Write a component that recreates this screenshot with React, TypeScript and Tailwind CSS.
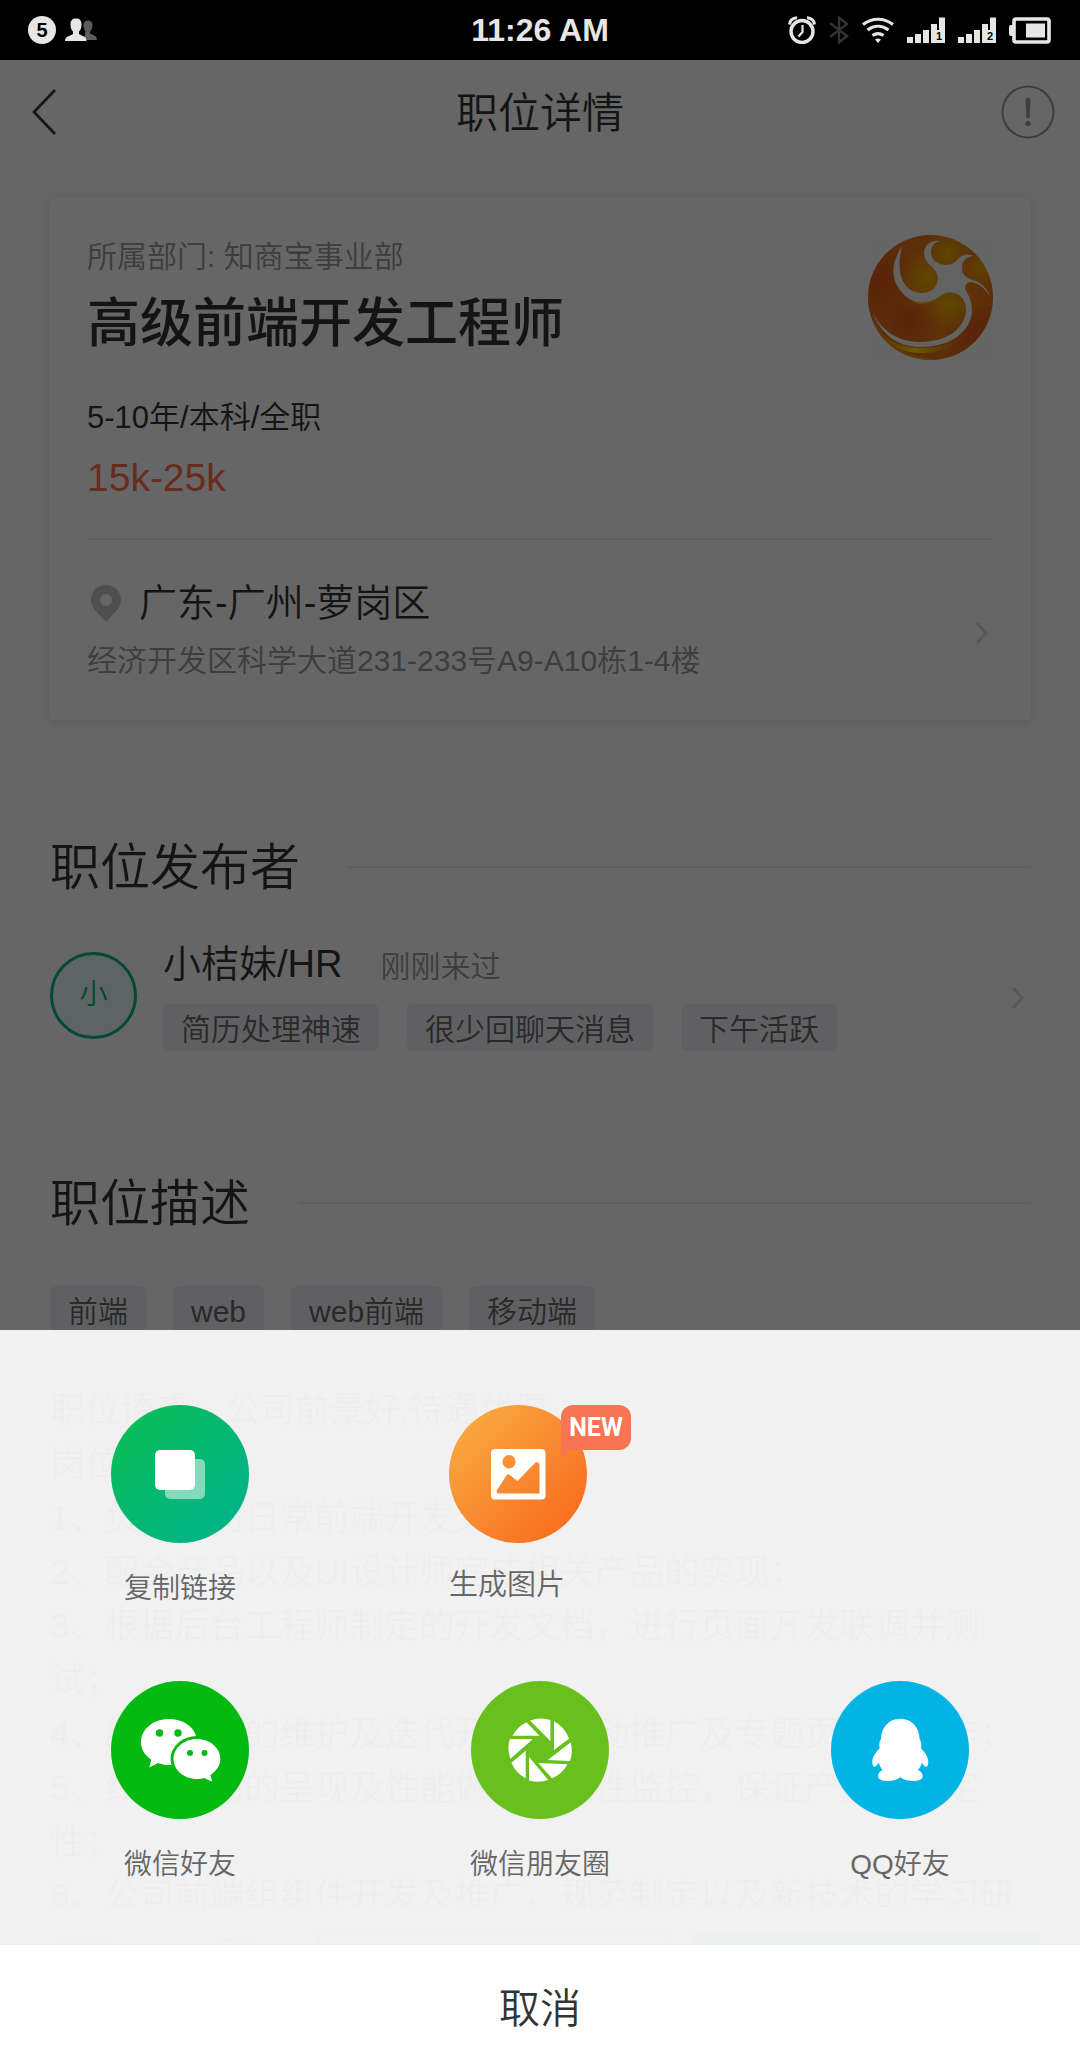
import type { ReactNode } from "react";

function StatusBar() {
  return (
    <div className="relative z-10 flex h-[60px] shrink-0 items-center bg-black px-[28px] text-[#e6e6e6]">
      <div className="flex flex-1 items-center gap-2">
        <span className="flex size-7 items-center justify-center rounded-full bg-[#e6e6e6] text-xl leading-none font-bold text-black">
          5
        </span>
        <svg width="34" height="24" viewBox="0 0 34 24" aria-hidden="true">
          <path
            d="M20 22h13c0-4-3-4.500-7-6.500v-2c2-2 2.500-4 2.500-6.500 0-3-2-4.500-4.500-4.500s-4.500 1.500-4.500 4.500c0 2.500.5 4.500 2 6.500z"
            fill="#5c5c5c"
          />
          <path
            d="M1 23c0-5 4.500-4.500 8-7v-2.500C7 12 6.500 9 6.500 6c0-3.500 2-5.500 5.500-5.500s5.500 2 5.500 5.500c0 3-.5 6-2.500 7.500V16c3.500 2.500 7.500 2 7.500 7z"
            fill="#e6e6e6"
          />
        </svg>
      </div>
      <span className="text-[32px] leading-none font-bold">11:26 AM</span>
      <div className="flex flex-1 items-center justify-end gap-[13px]">
        <svg width="28" height="28" viewBox="0 0 28 28" fill="none" stroke="#e6e6e6" aria-hidden="true">
          <circle cx="14" cy="15.500" r="11" strokeWidth="3.400" />
          <path d="M14.500 9v7l-4 4.500" strokeWidth="2.200" />
          <path d="M1.500 8.500C2 4.500 5 2 9 1.800M26.500 8.500C26 4.500 23 2 19 1.800" strokeWidth="3" />
        </svg>
        <svg width="20" height="28" viewBox="0 0 20 28" fill="none" stroke="#333333" strokeWidth="2.400" aria-hidden="true">
          <path d="M1 7l17 13-8 6.500V1.500L18 8 1 21" />
        </svg>
        <svg width="32" height="27" viewBox="0 0 32 27" fill="none" stroke="#e6e6e6" strokeWidth="3.200" aria-hidden="true">
          <path d="M1 7.500c9-7 21-7 30 0M5.500 13c6.500-5 14.500-5 21 0M10.500 18.500c3.500-2.500 7.500-2.500 11 0" />
          <path d="M13 22.500c2-1.200 4-1.200 6 0L16 26z" fill="#e6e6e6" stroke="none" />
        </svg>
        <SignalIcon sim="1" />
        <SignalIcon sim="2" />
        <svg width="43" height="27" viewBox="0 0 43 27" aria-hidden="true">
          <rect x="0" y="8" width="5" height="11" rx="2" fill="#e6e6e6" />
          <rect x="5" y="2" width="35" height="23" rx="2" fill="none" stroke="#e6e6e6" strokeWidth="3.600" />
          <rect x="17" y="6.500" width="19" height="14" fill="#e6e6e6" />
        </svg>
      </div>
    </div>
  );
}

function SignalIcon({ sim }: { sim: string }) {
  return (
    <span className="relative block">
      <svg width="38" height="26" viewBox="0 0 38 26" fill="#e6e6e6" aria-hidden="true">
        <path d="M0 20h6v6H0zM8 17h6v9H8zM16 13h6v13h-6zM24 7h6v6h2V0.500h6V26H24z" />
      </svg>
      <span className="absolute right-[3px] bottom-0 text-[11px] leading-[13px] font-bold text-black">{sim}</span>
    </span>
  );
}

function Chevron() {
  return (
    <svg
      className="mt-1.5"
      width="14"
      height="24"
      viewBox="0 0 14 24"
      fill="none"
      stroke="#dddddd"
      strokeWidth="3"
      aria-hidden="true"
    >
      <path d="M2 2l9 10-9 10" />
    </svg>
  );
}

function CompanyLogo() {
  return (
    <svg className="size-[125px] shrink-0 bg-[#fcfcfc]" viewBox="0 0 125 125" role="img" aria-label="公司标志">
      <defs>
        <radialGradient id="ball" cx="0.5" cy="0.5" r="0.5">
          <stop offset="0" stopColor="#ee9010" />
          <stop offset="0.6" stopColor="#e87c16" />
          <stop offset="1" stopColor="#e6701a" />
        </radialGradient>
        <radialGradient id="glow">
          <stop offset="0" stopColor="#eebe00" stopOpacity="0.8" />
          <stop offset="1" stopColor="#f0a800" stopOpacity="0" />
        </radialGradient>
        <radialGradient id="ember">
          <stop offset="0" stopColor="#e0501e" stopOpacity="0.8" />
          <stop offset="1" stopColor="#e0501e" stopOpacity="0" />
        </radialGradient>
        <clipPath id="ballClip">
          <circle cx="62.500" cy="62.500" r="62.500" />
        </clipPath>
        <linearGradient id="rim">
          <stop offset="0" stopColor="#f0a000" stopOpacity="0.3" />
          <stop offset="0.5" stopColor="#ffe600" />
          <stop offset="1" stopColor="#f09000" stopOpacity="0.1" />
        </linearGradient>
      </defs>
      <g clipPath="url(#ballClip)">
        <rect width="125" height="125" fill="url(#ball)" />
        <circle cx="12" cy="45" r="40" fill="url(#ember)" />
        <circle cx="108" cy="98" r="32" fill="url(#ember)" />
        <circle cx="42" cy="84" r="34" fill="url(#ember)" />
        <circle cx="58" cy="42" r="28" fill="url(#glow)" />
        <circle cx="82" cy="70" r="28" fill="url(#glow)" />
        <circle cx="80" cy="18" r="26" fill="url(#glow)" />
        <circle cx="112" cy="34" r="20" fill="url(#glow)" />
        <path d="M5 80c8 26 28 36 50 36 18 0 30-6 38-14-10 6-24 9-40 9C30 111 12 100 5 80z" fill="url(#rim)" transform="translate(-1 2)" />
        <path d="M2 84c6 24 24 38 46 41h30C40 124 14 110 2 84z" fill="#e8a000" opacity="0.8" />
        <path d="M38 60c6 6 10 9.500 16 9 6 0 12-3 16-7l-14 1z" fill="#f0c000" />
        <path
          d="M34 11C25 25 22 40 30 52c6 10 14 15 23 15 9 0 16-3 21-7 3-2 7-3 12-2 8 2 12 8 12 17-1 18-18 32-46 32C30 107 15 96 5 79c8 18 22 33 47 33 30 0 51-15 52-36 0-9-3-16-7-22 0-4 2-7 6-7 8 1 14 7 19 14-3-8-9-14-20-17-6-3-8-6-8-12 0-6 4-10 11-11-9-4-13 1-18 6-2 2-6 3-10 3-10-1-14-7-14-13 0-6 4-10 9-11-9-1-16 4-16 12 0 12 14 14 14 26-1 9-7 14-17 14-17-1-26-18-19-47z"
          fill="#f4f4f4"
        />
      </g>
    </svg>
  );
}

function Tags({ items, gap }: { items: string[]; gap: string }) {
  return (
    <ul className={`flex flex-wrap ${gap}`}>
      {items.map((item) => (
        <li key={item} className="rounded-md bg-[#f1f1f5] px-[18px] pt-[5px] pb-px text-[30px] leading-[41px] text-[#666666]">
          {item}
        </li>
      ))}
    </ul>
  );
}

function SectionTitle({ children }: { children: ReactNode }) {
  return (
    <div className="flex items-center gap-12">
      <h2 className="pt-[3px] text-[50px] leading-[60px] font-[350]">{children}</h2>
      <span className="h-0.5 flex-1 bg-[#ededed]" />
    </div>
  );
}

function JobCard() {
  return (
    <section className="mt-[33px] rounded-sm bg-white px-[38px] pt-[38px] shadow-[0_2px_12px_rgba(0,0,0,0.12)]">
      <div className="flex items-start justify-between">
        <div className="pt-0.5">
          <p className="text-[30px] leading-10 text-[#999999]">所属部门: 知商宝事业部</p>
          <h2 className="mt-[11px] text-[53px] leading-[72px] font-medium">高级前端开发工程师</h2>
          <p className="mt-[38px] text-[31px] leading-10">5-10年/本科/全职</p>
          <p className="mt-[15px] text-[39px] leading-[50px] text-[#fe6e4b]">15k-25k</p>
        </div>
        <CompanyLogo />
      </div>
      <a href="#location" className="mt-[35px] flex items-center justify-between border-t-2 border-[#ededed] pt-[38px] pr-1 pb-[39px]">
        <span>
          <span className="flex items-center gap-[18px] pl-1 text-[38px] leading-[50px]">
            <svg width="30" height="37" viewBox="0 0 30 37" aria-hidden="true">
              <path
                fillRule="evenodd"
                d="M15 0C6.500 0 0 6.500 0 15c0 9 9 14.500 15 22 6-7.500 15-13 15-22C30 6.500 23.500 0 15 0zm0 9a6 6 0 110 12 6 6 0 010-12z"
                fill="#c6c6c6"
              />
            </svg>
            广东-广州-萝岗区
          </span>
          <span className="mt-[13px] block text-[30px] leading-10 text-[#999999]">经济开发区科学大道231-233号A9-A10栋1-4楼</span>
        </span>
        <Chevron />
      </a>
    </section>
  );
}

function Publisher() {
  return (
    <a href="#publisher" className="mt-[41px] flex items-center pr-1.5">
      <span className="flex size-[87px] items-center justify-center rounded-full border-[3px] border-[#00b38a] bg-[#ecf9f9] text-[28px] text-[#00b38a]">
        小
      </span>
      <span className="ml-[26px] flex-1">
        <span className="flex items-baseline gap-[38px]">
          <span className="text-[38px] leading-[50px]">小桔妹/HR</span>
          <span className="text-[30px] leading-[50px] text-[#999999]">刚刚来过</span>
        </span>
        <span className="mt-3 block">
          <Tags items={["简历处理神速", "很少回聊天消息", "下午活跃"]} gap="gap-7" />
        </span>
      </span>
      <Chevron />
    </a>
  );
}

const DESCRIPTION = [
  "职位诱惑：公司前景好,待遇优厚",
  "岗位职责：",
  "1、负责公司日常前端开发文档；",
  "2、配合产品以及UI设计师完成相关产品的实现；",
  "3、根据后台工程师制定的开发文档，进行页面开发联调并测试；",
  "4、线上项目的维护及迭代开发、活动推广及专题页面的制作；",
  "5、线上页面的呈现及性能做出兼容性监控，保证产品的稳定性；",
  "6、公司前端组组件开发及推广，规范制定以及新技术的学习研究；",
];

function ActionBar() {
  return (
    <footer className="flex h-[153px] shrink-0 items-start bg-white pt-[25px] pr-10 pl-[54px]">
      <button type="button" aria-label="收藏" className="mt-1">
        <svg width="56" height="52" viewBox="0 0 56 52" fill="none" stroke="#999999" strokeWidth="3">
          <path d="M28 48C10 36 2 26 2 16 2 2 20-2 28 10 36-2 54 2 54 16c0 10-8 20-26 32z" />
        </svg>
      </button>
      <button type="button" aria-label="分享" className="mt-1 ml-[98px]">
        <svg width="54" height="52" viewBox="0 0 54 52" fill="none" stroke="#999999" strokeWidth="3">
          <path d="M30 4H20C10 4 3 11 3 22v26h34" />
          <path d="M40 2l12 14-12 14" stroke="#00b38a" />
        </svg>
      </button>
      <button type="button" aria-label="聊一聊" className="ml-14 h-[104px] flex-1 rounded border-2 border-[#00b38a]" />
      <button type="button" aria-label="投个简历" className="ml-[26px] h-[104px] flex-1 rounded bg-[#00b38a]" />
    </footer>
  );
}

function CopyIcon() {
  return (
    <svg className="size-[138px]" viewBox="0 0 138 138" aria-hidden="true">
      <defs>
        <linearGradient id="copyFill" x1="0.1" y1="0.1" x2="0.9" y2="0.9">
          <stop offset="0" stopColor="#09be58" />
          <stop offset="1" stopColor="#01b28a" />
        </linearGradient>
      </defs>
      <circle cx="69" cy="69" r="69" fill="url(#copyFill)" />
      <rect x="54" y="54" width="40" height="40" rx="5" fill="#ffffff" opacity="0.5" />
      <rect x="44" y="45" width="40" height="40" rx="5" fill="#ffffff" />
    </svg>
  );
}

function PictureIcon() {
  return (
    <svg className="size-[138px]" viewBox="0 0 138 138" aria-hidden="true">
      <defs>
        <linearGradient id="pictureFill" x1="0.1" y1="0.1" x2="0.9" y2="0.9">
          <stop offset="0" stopColor="#f9a943" />
          <stop offset="1" stopColor="#f86c1e" />
        </linearGradient>
      </defs>
      <circle cx="69" cy="69" r="69" fill="url(#pictureFill)" />
      <path
        fillRule="evenodd"
        d="M46 44h46.500a4 4 0 014 4v42.500a4 4 0 01-4 4H46a4 4 0 01-4-4V48a4 4 0 014-4zM60 50a6.600 6.800 0 100 13.600 6.600 6.800 0 000-13.600zM50 88.500h40.500V60c0-2.500-3-4-5-1.500L68.500 76l-7.500-6c-1-1-2.500-1-3.500.5L48 85c-1 1.800 0 3.500 2 3.500z"
        fill="#ffffff"
      />
    </svg>
  );
}

function WechatIcon() {
  return (
    <svg className="size-[138px]" viewBox="0 0 138 138" aria-hidden="true">
      <circle cx="69" cy="69" r="69" fill="#04b90f" />
      <path
        d="M58 38c-15.500 0-28 10-28 23.300 0 7.200 4 13.300 10.300 17.500L38.300 86.500l8.700-4.500c4 1.500 7.500 2.300 13 2 10 0 26-9 26-23C86 47.500 73.500 38 58 38z"
        fill="#ffffff"
      />
      <ellipse cx="86" cy="78" rx="26.500" ry="23" fill="#04b90f" />
      <path
        d="M86 58c-13 0-23.500 9-23.500 20S73 98 86 98c2.500 0 5-.4 7-1l8.300 3.800-2-6.800c6-3.800 10-9.500 10-16C109.500 67 99 58 86 58z"
        fill="#ffffff"
      />
      <g fill="#04b90f">
        <circle cx="48.500" cy="52" r="3.700" />
        <circle cx="67" cy="52" r="3.700" />
        <circle cx="79" cy="72" r="3" />
        <circle cx="93.500" cy="72" r="3" />
      </g>
    </svg>
  );
}

function MomentsIcon() {
  return (
    <svg className="size-[138px]" viewBox="0 0 138 138" aria-hidden="true">
      <circle cx="69" cy="69" r="69" fill="#69c01d" />
      <g fill="#ffffff">
        <path d="M59 39.500A31.500 31.500 0 0179.400 39V60z" />
        <path d="M83 40.300A31.500 31.500 0 0198 57.700L83 69z" />
        <path d="M99.700 61.300A31.500 31.500 0 0199 80L76.900 79z" />
        <path d="M96.500 83.300A31.500 31.500 0 0181 97.300L67.200 82z" />
        <path d="M77.200 99A31.500 31.500 0 0158 99.400V76z" />
        <path d="M54.700 97.300A31.500 31.500 0 0140.400 81.700L54.700 69.700z" />
        <path d="M39.400 77.700A31.500 31.500 0 0138.800 58H61.900z" />
        <path d="M41.500 54.700A31.500 31.500 0 0155.400 41.300L68.600 54.700z" />
      </g>
    </svg>
  );
}

function QQIcon() {
  return (
    <svg className="size-[138px]" viewBox="0 0 138 138" aria-hidden="true">
      <circle cx="69" cy="69" r="69" fill="#02b3e5" />
      <path
        d="M69.300 37.700c-12 0-19 9-19.300 20.300-1.500 2-2.300 5-1.300 9-4 4.500-7.400 9-7.400 14 0 3.500 1.400 5.500 3 4.500 1.300-.8 2.500-2.300 3.500-3.800.8 3 2 5.300 3.900 7.500-3 .8-4.700 3-4.700 5.800 0 3.500 3.500 5 9 5 6 0 10.500-1.500 13.300-3.700 2.800 2.200 7.300 3.700 13.300 3.700 5.500 0 9-1.500 9-5 0-2.800-1.700-5-4.700-5.800 1.900-2.200 3.100-4.500 3.900-7.500 1 1.500 2.200 3 3.500 3.800 1.600 1 3-1 3-4.500 0-5-3.400-9.500-7.400-14 1-4 .2-7-1.300-9-.3-11.300-7.300-20.300-19.300-20.300z"
        fill="#ffffff"
      />
    </svg>
  );
}

function ShareItem({ icon, label }: { icon: ReactNode; label: string }) {
  return (
    <button type="button" className="flex flex-col items-center justify-self-center">
      {icon}
      <span className="mt-[26px] text-[28px] leading-10">{label}</span>
    </button>
  );
}

function ShareSheet() {
  return (
    <div role="dialog" aria-modal="true" aria-label="分享" className="absolute inset-x-0 top-[60px] bottom-0 flex flex-col justify-end bg-black/60">
      <div className="grid grid-cols-3 gap-y-[72px] bg-[#f7f7f7]/96 pt-[75px] pb-[60px] text-[#666666]">
        <ShareItem icon={<CopyIcon />} label="复制链接" />
        <button type="button" className="relative flex w-[182px] flex-col items-start justify-self-center">
          <PictureIcon />
          <span className="mt-[22px] text-[29px] leading-10">生成图片</span>
          <span className="absolute top-0 right-0 flex h-[45px] w-[70px] items-center justify-center rounded-xl bg-[#f77552] font-['Roboto'] text-[25px] leading-none font-bold text-white">
            <svg className="absolute top-8 left-0" width="14" height="21" viewBox="0 0 14 21" aria-hidden="true">
              <path d="M0 0h14L9 13 1 20.500 0 20z" fill="#f77552" />
            </svg>
            <span className="relative">NEW</span>
          </span>
        </button>
        <span />
        <ShareItem icon={<WechatIcon />} label="微信好友" />
        <ShareItem icon={<MomentsIcon />} label="微信朋友圈" />
        <ShareItem icon={<QQIcon />} label="QQ好友" />
      </div>
      <button type="button" className="h-[115px] w-full bg-white pt-3.5 text-[41px] text-[#333333]">
        取消
      </button>
    </div>
  );
}

export default function App() {
  return (
    <div className="relative flex h-screen flex-col overflow-hidden bg-white font-['Liberation_Sans','Noto_Sans_CJK_SC',sans-serif] font-[350] text-[#333333]">
      <StatusBar />
      <header className="flex h-[104px] shrink-0 items-center justify-between px-[25px]">
        <button type="button" aria-label="返回" className="w-[54px] pl-[7px]">
          <svg width="24" height="46" viewBox="0 0 24 46" fill="none" stroke="#333333" strokeWidth="2.600">
            <path d="M23 1L2 23l21 22" />
          </svg>
        </button>
        <h1 className="pt-[3px] text-[42px] leading-[60px]">职位详情</h1>
        <button type="button" aria-label="举报">
          <svg width="54" height="54" viewBox="0 0 54 54">
            <circle cx="27" cy="27" r="25.500" fill="none" stroke="#999999" strokeWidth="2" />
            <path d="M24.500 15a2.500 2.500 0 015 0l-1 18h-3z" fill="#999999" />
            <circle cx="27" cy="38.500" r="2.600" fill="#999999" />
          </svg>
        </button>
      </header>
      <main className="min-h-0 flex-1 overflow-hidden px-[49px]">
        <JobCard />
        <section className="mt-[115px] pl-px">
          <SectionTitle>职位发布者</SectionTitle>
          <Publisher />
        </section>
        <section className="mt-[120px] pl-px">
          <SectionTitle>职位描述</SectionTitle>
          <div className="mt-[52px]">
            <Tags items={["前端", "web", "web前端", "移动端"]} gap="gap-[27px]" />
          </div>
          <div className="mt-[50px] text-[35px] leading-[54px]">
            {DESCRIPTION.map((line) => (
              <p key={line}>{line}</p>
            ))}
          </div>
        </section>
      </main>
      <ActionBar />
      <ShareSheet />
    </div>
  );
}
